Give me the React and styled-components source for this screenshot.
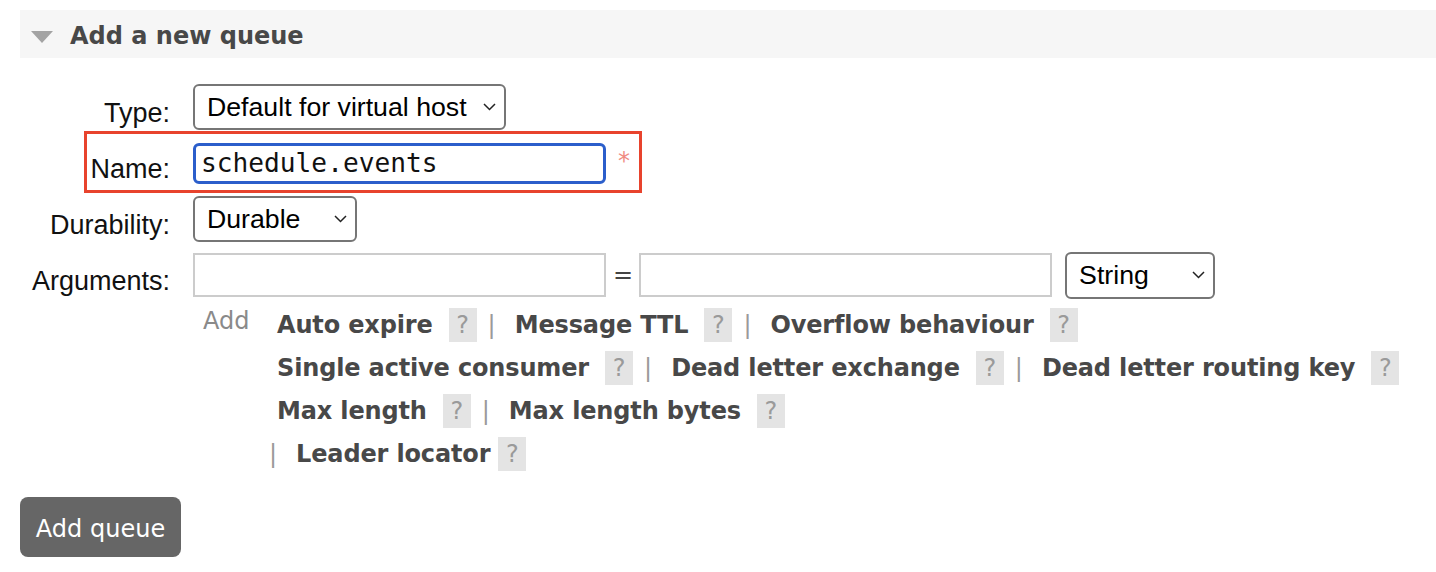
import React from 'react';
import styled, { createGlobalStyle } from 'styled-components';

const GlobalStyle = createGlobalStyle`
  html, body { margin: 0; padding: 0; background: #fff; }
  body { font-family: "DejaVu Sans", Verdana, sans-serif; color: #484848; }
  * { box-sizing: border-box; }
`;

const Page = styled.div`
  padding: 10px 0 0 20px;
  width: 1436px;
`;

const SectionHeader = styled.div`
  display: flex;
  align-items: center;
  height: 48px;
  background: #f6f6f6;
  padding: 4px 0 0 11px;
`;

const Toggle = styled.span`
  width: 0;
  height: 0;
  border-left: 11px solid transparent;
  border-right: 11px solid transparent;
  border-top: 12px solid #a3a3a3;
  margin-right: 17px;
  margin-top: 2px;
`;

const HeaderTitle = styled.h2`
  margin: 0;
  font-size: 24px;
  font-weight: bold;
  color: #484848;
  line-height: 1;
`;

const Form = styled.div`
  margin-top: 21px;
`;

const FormRow = styled.div`
  position: relative;
  display: flex;
  align-items: center;
  height: 56px;
`;

const Label = styled.label`
  width: 150px;
  flex: none;
  text-align: right;
  white-space: nowrap;
  font-family: "Liberation Sans", Arial, Helvetica, sans-serif;
  font-size: 27px;
  color: #111;
  padding-top: 13px;
  margin-right: 23px;
`;

const SelectWrap = styled.div`
  position: relative;
  width: ${(p) => p.$w}px;
  height: ${(p) => p.$h || 46}px;
  margin-left: ${(p) => p.$ml || 0}px;
  flex: none;
`;

const Select = styled.select`
  appearance: none;
  -webkit-appearance: none;
  width: 100%;
  height: 100%;
  border: 2px solid #767676;
  border-radius: 6px;
  background: #fff;
  font-family: "Liberation Sans", Arial, Helvetica, sans-serif;
  font-size: 26.7px;
  color: #000;
  padding: 0 0 0 12px;
  margin: 0;
`;

const Chevron = styled.svg`
  position: absolute;
  right: 10px;
  top: 50%;
  margin-top: -4px;
  pointer-events: none;
`;

const NameInput = styled.input`
  width: 413px;
  height: 41px;
  border: 3px solid #2b5ecb;
  border-radius: 6px;
  outline: none;
  font-family: "DejaVu Sans Mono", "Liberation Mono", monospace;
  font-size: 26.2px;
  color: #111;
  padding: 0 0 0 5px;
  margin: 0;
`;

const Required = styled.span`
  margin-left: 12px;
  font-size: 24px;
  color: #f08b82;
  margin-top: -5px;
`;

const Highlight = styled.div`
  position: absolute;
  left: 64px;
  top: -4px;
  width: 558px;
  height: 62px;
  border: 3px solid #e8432d;
  pointer-events: none;
`;

const ArgInput = styled.input`
  width: 413px;
  height: 44px;
  border: 2px solid #cccccc;
  border-radius: 0;
  outline: none;
  margin: 0;
  font-size: 24px;
`;

const Equals = styled.span`
  margin: 0 6px 0 7px;
  font-size: 24px;
  color: #444;
`;

const Extras = styled.div`
  display: flex;
  margin-left: 173px;
`;

const AddLink = styled.span`
  width: 84px;
  flex: none;
  padding-left: 10px;
  font-size: 24px;
  color: #8a8a8a;
  line-height: 43px;
  margin-top: -3px;
`;

const LinkList = styled.div`
  display: flex;
  flex-direction: column;
`;

const LinkRow = styled.div`
  display: flex;
  align-items: center;
  height: 43px;
`;

const ArgLink = styled.span`
  font-size: 24px;
  font-weight: bold;
  letter-spacing: -0.15px;
  color: #484848;
  white-space: nowrap;
`;

const Help = styled.span`
  display: inline-flex;
  align-items: center;
  justify-content: center;
  width: 28px;
  height: 34px;
  background: #e4e4e4;
  color: #9a9a9a;
  font-size: 24px;
  margin-left: ${(p) => (p.$tight ? 8 : 16)}px;
`;

const Sep = styled.span`
  color: #9a9a9a;
  font-size: 24px;
  margin: 0 19px 0 ${(p) => (p.$lead ? -8 : 11)}px;
`;

const SubmitButton = styled.button`
  margin-top: 22px;
  height: 60px;
  width: 161px;
  padding: 3px 0 0;
  background: #666;
  color: #fff;
  border: none;
  border-radius: 8px;
  font-family: "DejaVu Sans", Verdana, sans-serif;
  font-size: 24px;
`;

const ChevronIcon = () => (
  <Chevron width="13" height="8" viewBox="0 0 13 8">
    <path d="M1 1 L6.5 6.5 L12 1" fill="none" stroke="#222" strokeWidth="1.5" />
  </Chevron>
);

const Dropdown = ({ w, h, ml, value, options }) => (
  <SelectWrap $w={w} $h={h} $ml={ml}>
    <Select defaultValue={value}>
      {options.map((o) => (
        <option key={o}>{o}</option>
      ))}
    </Select>
    <ChevronIcon />
  </SelectWrap>
);

const rows = [
  ['Auto expire', 'Message TTL', 'Overflow behaviour'],
  ['Single active consumer', 'Dead letter exchange', 'Dead letter routing key'],
  ['Max length', 'Max length bytes'],
];

export default function App() {
  return (
    <Page>
      <GlobalStyle />
      <SectionHeader>
        <Toggle />
        <HeaderTitle>Add a new queue</HeaderTitle>
      </SectionHeader>
      <Form>
        <FormRow>
          <Label>Type:</Label>
          <Dropdown w={313} value="Default for virtual host" options={['Default for virtual host', 'Classic', 'Quorum', 'Stream']} />
        </FormRow>
        <FormRow>
          <Label>Name:</Label>
          <NameInput defaultValue="schedule.events" />
          <Required>*</Required>
          <Highlight />
        </FormRow>
        <FormRow>
          <Label>Durability:</Label>
          <Dropdown w={164} value="Durable" options={['Durable', 'Transient']} />
        </FormRow>
        <FormRow>
          <Label>Arguments:</Label>
          <ArgInput />
          <Equals>=</Equals>
          <ArgInput />
          <Dropdown w={150} h={47} ml={13} value="String" options={['String', 'Number', 'Boolean', 'List']} />
        </FormRow>
      </Form>
      <Extras>
        <AddLink>Add</AddLink>
        <LinkList>
          {rows.map((row, i) => (
            <LinkRow key={i}>
              {row.map((name, j) => (
                <React.Fragment key={name}>
                  <ArgLink>{name}</ArgLink>
                  <Help>?</Help>
                  {j < row.length - 1 && <Sep>|</Sep>}
                </React.Fragment>
              ))}
            </LinkRow>
          ))}
          <LinkRow>
            <Sep $lead>|</Sep>
            <ArgLink>Leader locator</ArgLink>
            <Help $tight>?</Help>
          </LinkRow>
        </LinkList>
      </Extras>
      <SubmitButton>Add queue</SubmitButton>
    </Page>
  );
}
